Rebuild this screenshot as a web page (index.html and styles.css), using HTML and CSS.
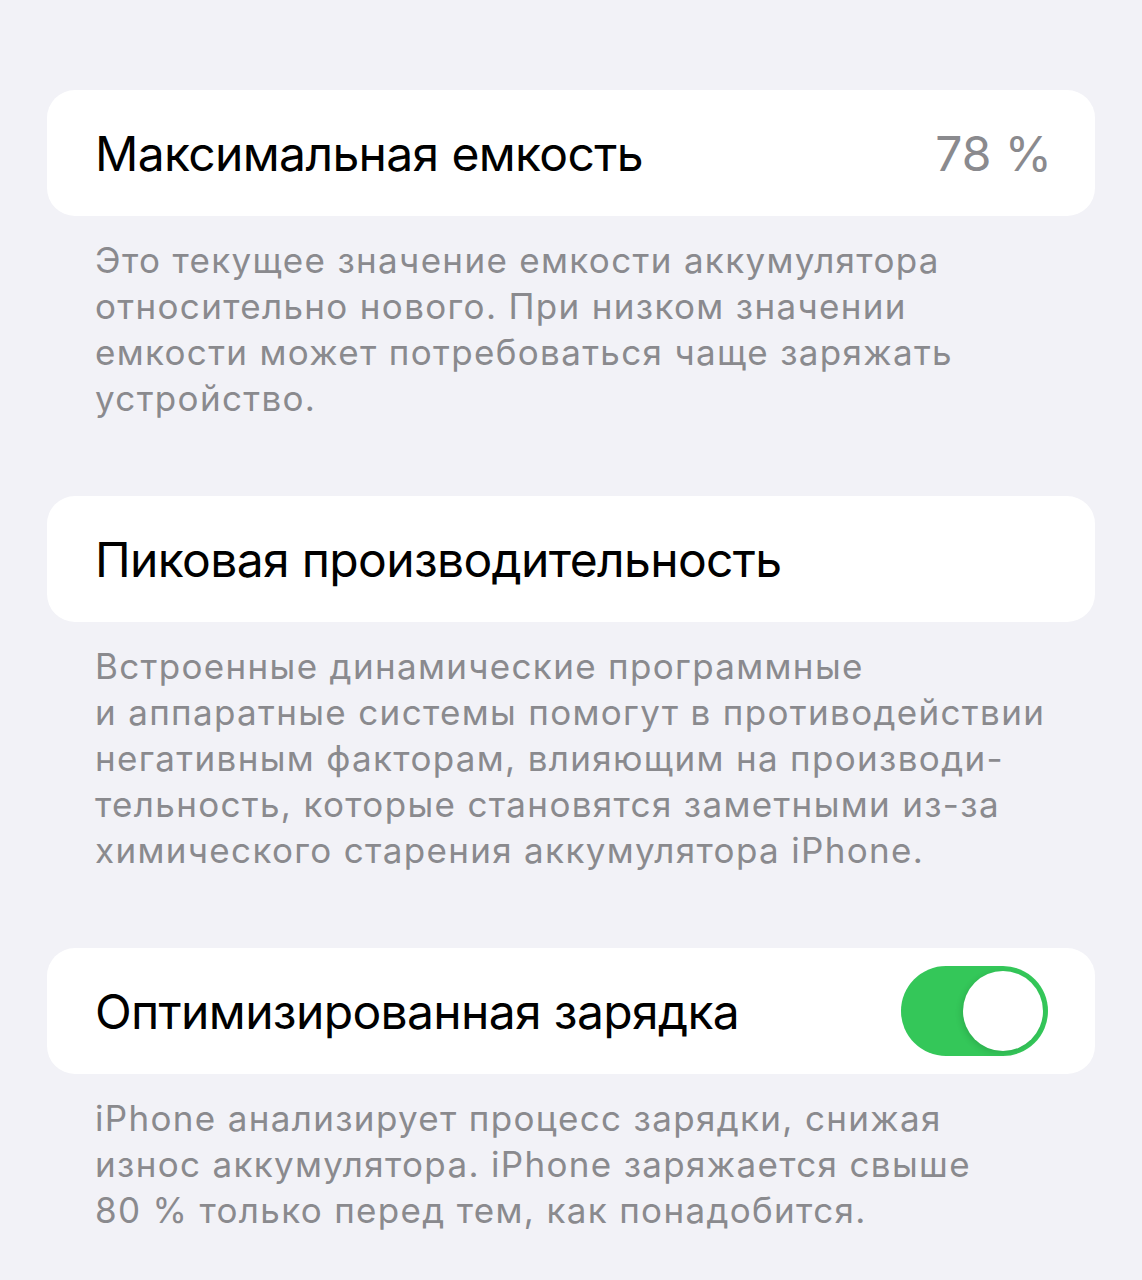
FILE: index.html
```html
<!DOCTYPE html>
<html lang="ru">

<head>
    <meta charset="UTF-8">
    <meta name="viewport" content="width=device-width, initial-scale=1.0">
    <title>Состояние аккумулятора</title>
    <link rel="stylesheet" href="styles.css">
</head>

<body>
    <div class="settings">
        <!-- Максимальная емкость -->
        <section class="group">
            <div class="cell">
                <span class="cell-title">Максимальная емкость</span>
                <span class="cell-value">78 %</span>
            </div>
            <p class="footer">Это текущее значение емкости аккумулятора<br>относительно нового. При низком значении<br>емкости может потребоваться чаще заряжать<br>устройство.</p>
        </section>

        <!-- Пиковая производительность -->
        <section class="group">
            <div class="cell">
                <span class="cell-title">Пиковая производительность</span>
            </div>
            <p class="footer">Встроенные динамические программные<br>и аппаратные системы помогут в противодействии<br>негативным факторам, влияющим на производи-<br>тельность, которые становятся заметными из-за<br>химического старения аккумулятора iPhone.</p>
        </section>

        <!-- Оптимизированная зарядка -->
        <section class="group">
            <div class="cell">
                <span class="cell-title">Оптимизированная зарядка</span>
                <div class="switch on"><div class="knob"></div></div>
            </div>
            <p class="footer">iPhone анализирует процесс зарядки, снижая<br>износ аккумулятора. iPhone заряжается свыше<br>80 % только перед тем, как понадобится.</p>
        </section>
    </div>
</body>

</html>
```

FILE: styles.css
```css
/* СБРОС */
* {
    margin: 0;
    padding: 0;
    box-sizing: border-box;
}

body {
    font-family: 'Inter', 'Noto Sans', sans-serif;
    background: #f2f2f7;
    color: #000;
    width: 1142px;
    height: 1280px;
    overflow: hidden;
}

.settings {
    padding: 90px 47px 0;
    display: flex;
    flex-direction: column;
    gap: 75px;
}

/* ЯЧЕЙКА */
.cell {
    height: 126px;
    background: #fff;
    border-radius: 28px;
    padding: 0 47px 0 48px;
    display: flex;
    align-items: center;
    justify-content: space-between;
}

.cell-title {
    font-size: 48px;
    letter-spacing: -0.65px;
}

.cell-value {
    font-size: 48px;
    color: #8a8a8e;
    margin-right: -4px;
}

/* ПОДПИСЬ ПОД ГРУППОЙ */
.footer {
    padding: 21px 48px 0;
    font-size: 35px;
    line-height: 46px;
    color: #8a8a8e;
    letter-spacing: 1.33px;
}

/* ПЕРЕКЛЮЧАТЕЛЬ */
.switch {
    width: 147px;
    height: 90px;
    border-radius: 45px;
    background: #e9e9ea;
    padding: 5px;
    display: flex;
}

.switch.on {
    background: #34c759;
    justify-content: flex-end;
}

.knob {
    width: 80px;
    height: 80px;
    border-radius: 50%;
    background: #fff;
    box-shadow: -2px 2px 6px rgba(0, 0, 0, 0.12);
}
```
